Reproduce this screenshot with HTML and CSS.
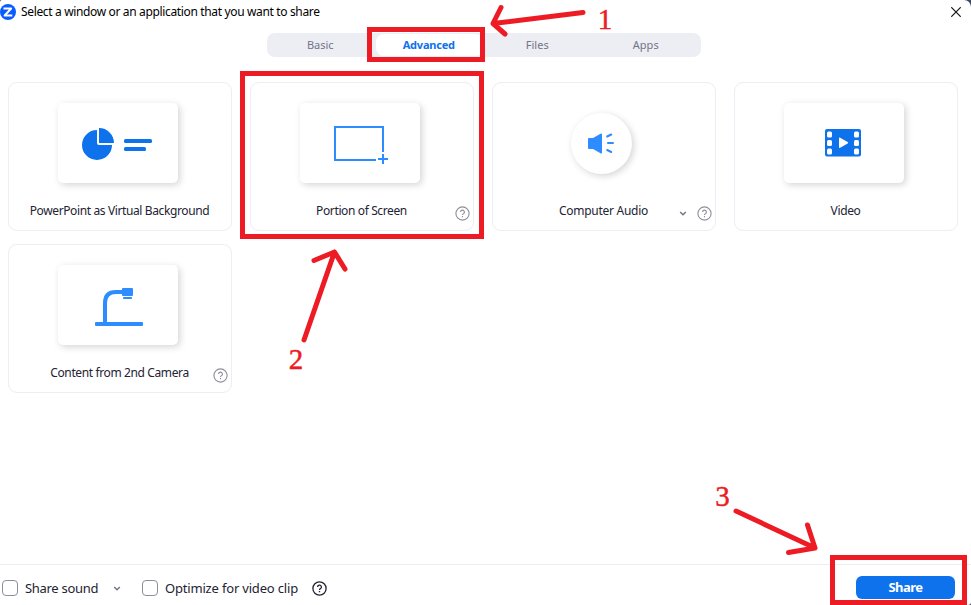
FILE: index.html
```html
<!DOCTYPE html>
<html lang="en">
<head>
  <meta charset="UTF-8">
  <title>Select a window or an application that you want to share</title>
  <link rel="stylesheet" href="styles.css">
</head>
<body>
  <div class="window">
    <header class="titlebar">
      <svg class="logo" width="16" height="16" viewBox="0 0 16 16">
        <circle cx="8" cy="8" r="8" fill="#0b5cff"/>
        <path d="M3.500 4.500h7.700L4.600 11.500H12.300" fill="none" stroke="#fff" stroke-width="1.900" stroke-linejoin="round"/>
      </svg>
      <span class="title">Select a window or an application that you want to share</span>
      <svg class="close" width="10" height="10" viewBox="0 0 10 10">
        <path d="M0.3 0.3l9.4 9.4M9.7 0.3L0.3 9.7" stroke="#111" stroke-width="1.2"/>
      </svg>
    </header>

    <nav class="tabs">
      <span class="tab">Basic</span>
      <span class="tab active">Advanced</span>
      <span class="tab">Files</span>
      <span class="tab">Apps</span>
    </nav>

    <main class="cards">
      <div class="card">
        <div class="preview">
          <svg width="120" height="80" viewBox="0 0 120 80" fill="#0e72ed">
            <path d="M39 27a15 15 0 1 0 15 15H41q-2 0-2-2z"/>
            <path d="M41 25a15 15 0 0 1 15 15H41z"/>
            <rect x="66" y="36" width="28" height="4" rx="1.5"/>
            <rect x="66" y="44" width="22" height="4" rx="1.5"/>
          </svg>
        </div>
        <div class="label"><span class="name">PowerPoint as Virtual Background</span></div>
      </div>

      <div class="card">
        <div class="preview">
          <svg width="120" height="80" viewBox="0 0 120 80" fill="none" stroke="#2d8cff" stroke-width="2">
            <path d="M76 57H35V24h48v25M83 51v10M78 56h10"/>
          </svg>
        </div>
        <div class="label">
          <span class="name">Portion of Screen</span>
          <span class="extras"><svg class="help" width="15" height="15" viewBox="0 0 15 15"><circle cx="7.5" cy="7.5" r="6.6"/><path d="M5.6 6.1a1.9 1.9 0 1 1 2.8 1.6q-.9.4-.9 1.2M7.5 10v1.2"/></svg></span>
        </div>
      </div>

      <div class="card">
        <div class="preview round">
          <svg width="61" height="61" viewBox="0 0 61 61">
            <path d="M17 26q0-1 1-1h4l7.500-4.300q1.500-.7 1.500.8v18q0 1.500-1.500.8L22 36h-4q-1 0-1-1z" fill="#2d8cff"/>
            <path d="M36.200 23.500l4-2M37 30h5M36.200 37l4 2" stroke="#2d8cff" stroke-width="2" stroke-linecap="round"/>
          </svg>
        </div>
        <div class="label">
          <span class="name audio">Computer Audio</span>
          <span class="extras">
            <svg class="chevron" width="8" height="5" viewBox="0 0 8 5"><path d="M1.200 1L4 3.700 6.800 1"/></svg>
            <svg class="help" width="15" height="15" viewBox="0 0 15 15"><circle cx="7.5" cy="7.5" r="6.6"/><path d="M5.6 6.1a1.9 1.9 0 1 1 2.8 1.6q-.9.4-.9 1.2M7.5 10v1.2"/></svg>
          </span>
        </div>
      </div>

      <div class="card">
        <div class="preview">
          <svg width="120" height="80" viewBox="0 0 120 80">
            <rect x="41" y="26" width="36" height="27.500" rx="2" fill="#0e72ed"/>
            <g fill="#fff">
              <rect x="43" y="28.500" width="5" height="6" rx="1.500"/>
              <rect x="43" y="37" width="5" height="6" rx="1.500"/>
              <rect x="43" y="45.500" width="5" height="6" rx="1.500"/>
              <rect x="70" y="28.500" width="5" height="6" rx="1.500"/>
              <rect x="70" y="37" width="5" height="6" rx="1.500"/>
              <rect x="70" y="45.500" width="5" height="6" rx="1.500"/>
              <path d="M55 35.300q0-1.200 1.100-.6l7.600 4.400q1 .7 0 1.400l-7.600 4.300q-1.100.6-1.100-.6z"/>
            </g>
          </svg>
        </div>
        <div class="label"><span class="name">Video</span></div>
      </div>

      <div class="card">
        <div class="preview">
          <svg width="120" height="80" viewBox="0 0 120 80" fill="#2d8cff">
            <path d="M47 59V38q0-11 11-11h8" fill="none" stroke="#2d8cff" stroke-width="4"/>
            <rect x="64" y="23" width="11" height="8" rx="1"/>
            <rect x="65" y="32" width="9" height="2" rx="0.800"/>
            <rect x="37" y="57" width="48" height="4" rx="1"/>
          </svg>
        </div>
        <div class="label">
          <span class="name">Content from 2nd Camera</span>
          <span class="extras"><svg class="help" width="15" height="15" viewBox="0 0 15 15"><circle cx="7.5" cy="7.5" r="6.6"/><path d="M5.6 6.1a1.9 1.9 0 1 1 2.8 1.6q-.9.4-.9 1.2M7.5 10v1.2"/></svg></span>
        </div>
      </div>
    </main>

    <footer class="bottombar">
      <span class="checkbox"></span>
      <span class="option sound">Share sound</span>
      <svg class="chevron" width="8" height="5" viewBox="0 0 8 5"><path d="M1.200 1L4 3.700 6.800 1"/></svg>
      <span class="checkbox second"></span>
      <span class="option optimize">Optimize for video clip</span>
      <svg class="help dark" width="15" height="15" viewBox="0 0 15 15"><circle cx="7.5" cy="7.5" r="6.6"/><path d="M5.6 6.1a1.9 1.9 0 1 1 2.8 1.6q-.9.4-.9 1.2M7.5 10v1.2"/></svg>
      <button class="share">Share</button>
    </footer>
  </div>

  <!-- numbered steps drawn over the window -->
  <svg class="steps" width="971" height="605" viewBox="0 0 971 605">
    <g class="marks">
      <rect x="369.500" y="29.500" width="113" height="30"/>
      <rect x="242.500" y="73.500" width="239" height="163"/>
      <rect x="832.500" y="557.500" width="132" height="45"/>
      <g stroke-linecap="round" stroke-linejoin="round">
        <path d="M583 12.500L493 23.500M501 7.500L493 23.500L505 34"/>
        <path d="M304 340L334.500 252M314 260.500L334.500 252L345 269"/>
        <path d="M736 511L815 548M807.500 525L815 548L788.500 552.500"/>
      </g>
    </g>
    <text x="605" y="29">1</text>
    <text x="296" y="369">2</text>
    <text x="722.500" y="506">3</text>
  </svg>
</body>
</html>
```

FILE: styles.css
```css
body {
  margin: 0;
  background: #3b4a5f;
  font-family: "Noto Sans", "Open Sans", sans-serif;
  overflow: hidden;
}
.window {
  width: 971px;
  height: 605px;
  display: flex;
  flex-direction: column;
  background: #fff;
  border-radius: 2px 7px 3px 0;
}
svg {
  display: block;
  flex: none;
}
.titlebar {
  height: 33px;
  display: flex;
  align-items: flex-start;
  box-sizing: border-box;
  padding: 4px 10px 0 0;
}
.title {
  margin-left: 5px;
  line-height: 16px;
  font-size: 12px;
  letter-spacing: -0.35px;
  color: #000;
  white-space: nowrap;
}
.close {
  margin: 3px 0 0 auto;
}
.tabs {
  width: 434px;
  height: 24px;
  margin-left: 267px;
  display: grid;
  grid-template-columns: repeat(4, 1fr);
  background: #ededf4;
  border-radius: 8px;
}
.tab {
  padding-right: 2px;
  font-size: 11px;
  line-height: 24px;
  text-align: center;
  color: #747487;
}
.tab.active {
  margin: 1px 0;
  line-height: 22px;
  font-weight: bold;
  letter-spacing: -0.2px;
  background: #fff;
  border-radius: 8px;
  color: #0e72ed;
}
.cards {
  flex: 1;
  display: grid;
  grid-template-columns: repeat(4, 224px);
  grid-auto-rows: 149px;
  gap: 13px 18px;
  padding: 25px 0 0 8px;
}
.card {
  box-sizing: border-box;
  border: 1px solid #ededf4;
  border-radius: 9px;
  display: flex;
  flex-direction: column;
  align-items: center;
  padding-top: 20px;
}
.preview {
  width: 120px;
  height: 80px;
  margin-right: 4px;
  border-radius: 5px;
  background: #fff;
  box-shadow: 2px 2px 7px rgba(0, 0, 0, 0.17);
}
.preview.round {
  width: 61px;
  height: 61px;
  margin: 10px 5px 9px 0;
  border-radius: 50%;
}
.label {
  width: 100%;
  height: 24px;
  margin-top: 16px;
  display: grid;
  grid-template-columns: 1fr auto 1fr;
}
.name {
  grid-column: 2;
  padding-right: 1px;
  line-height: 24px;
  font-size: 12px;
  color: #232333;
  letter-spacing: -0.38px;
  white-space: nowrap;
}
.name.audio {
  letter-spacing: -0.28px;
}
.extras {
  display: flex;
  justify-content: flex-end;
  align-items: center;
  gap: 10px;
  padding: 4px 3px 0 0;
}
.help {
  fill: none;
  stroke: #8e8e9c;
  stroke-width: 1.1;
}
.help.dark {
  margin-top: 1px;
  stroke: #232333;
  stroke-width: 1.3;
}
.chevron {
  fill: none;
  stroke: #747487;
  stroke-width: 1.5;
}
.bottombar {
  height: 41px;
  box-sizing: border-box;
  border-top: 1px solid #ededf4;
  display: flex;
  align-items: center;
  padding: 6px 16px 0 2px;
}
.checkbox {
  flex: none;
  width: 16px;
  height: 16px;
  margin-top: -1px;
  box-sizing: border-box;
  border: 1px solid #8e8e9c;
  border-radius: 4px;
}
.checkbox.second {
  margin-left: 21px;
}
.option {
  margin: -1px 0 0 7px;
  font-size: 13px;
  line-height: 18px;
  color: #232333;
  white-space: nowrap;
}
.sound {
  width: 88px;
  letter-spacing: -0.3px;
}
.optimize {
  width: 147px;
  letter-spacing: -0.18px;
}
.share {
  width: 99px;
  height: 23px;
  margin: -1px 0 0 auto;
  padding: 0;
  border: 0;
  border-radius: 6px;
  background: #0e72ed;
  color: #fff;
  font: bold 13px/23px "Noto Sans", "Open Sans", sans-serif;
  letter-spacing: -0.5px;
}
.steps {
  position: absolute;
  left: 0;
  top: 0;
}
.marks {
  fill: none;
  stroke: #ed1c24;
  stroke-width: 5;
}
.steps text {
  fill: #ed1c24;
  stroke: #ed1c24;
  stroke-width: 0.5;
  font: 29px "Liberation Serif", serif;
  text-anchor: middle;
}
```
